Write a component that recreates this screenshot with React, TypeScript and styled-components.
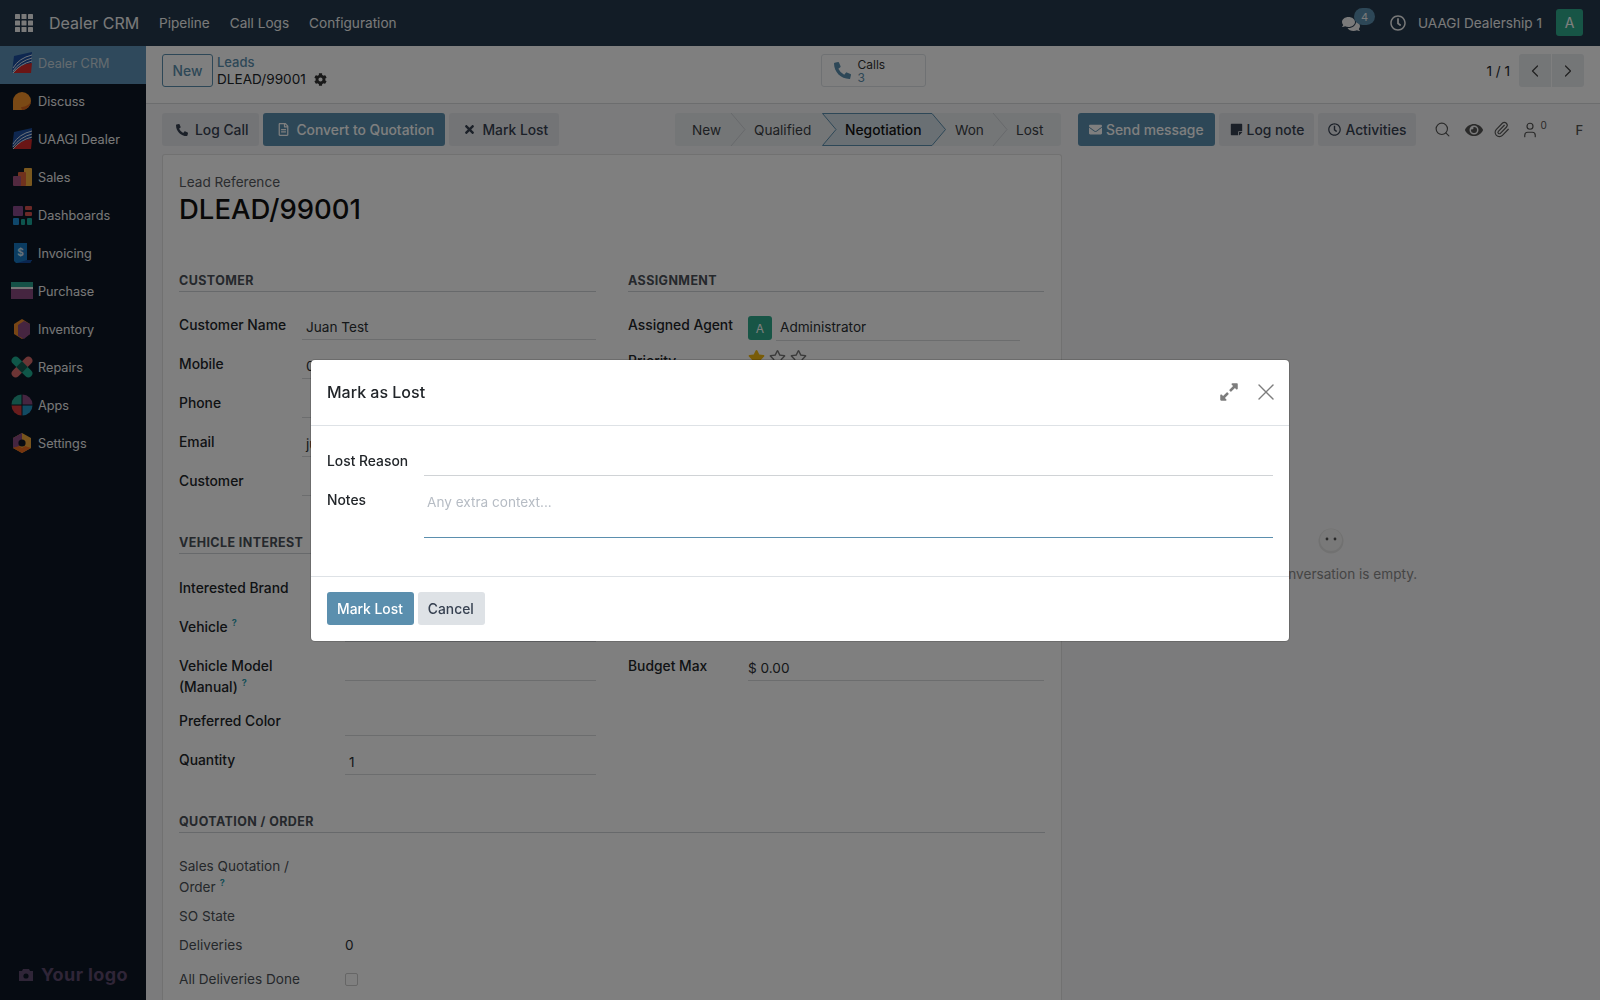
import React from "react";
import styled, { createGlobalStyle } from "styled-components";
import {
  FaPhoneAlt, FaRegFileAlt, FaTimes, FaEnvelope, FaStickyNote, FaRegClock, FaEye,
  FaCog, FaComments, FaStar, FaRegStar, FaExpandAlt,
} from "react-icons/fa";
import { ChevronLeft, ChevronRight, X, Search, Paperclip, User } from "lucide-react";

const Global = createGlobalStyle`
  html, body { margin: 0; padding: 0; height: 100%; background: #fff; }
  body { font-family: Inter, "Liberation Sans", sans-serif; font-size: 13.6px; color: #212529; overflow: hidden; }
  * { box-sizing: border-box; }
`;

const primary = "#5b8fae";
const medium = "13.85px";

const Page = styled.div`width: 1600px; height: 1000px; display: flex; flex-direction: column; overflow: hidden; position: relative;`;

const Navbar = styled.header`height: 46px; flex: none; background: #24394c; color: #f4f4f4; display: flex; align-items: center; padding-bottom: 1px;`;
const AppsIcon = styled.svg`width: 18px; height: 18px; margin: 0 16px 0 15px; flex: none;`;
const Brand = styled.span`font-size: 16px; width: 110px;`;
const NavMenu = styled.nav`display: flex; gap: 20px;`;
const NavRight = styled.div`margin-left: auto; display: flex; align-items: center; padding-right: 17px;`;
const ChatIcon = styled.span`position: relative; width: 48px; display: flex; font-size: 18px; margin-top: 3px;`;
const Badge = styled.span`position: absolute; left: 12px; top: -7px; width: 21px; height: 17px; border-radius: 9px; background: ${primary}; font-size: 11px; display: flex; align-items: center; justify-content: center;`;
const ClockIcon = styled.span`width: 28px; display: flex; font-size: 16px;`;
const Company = styled.span`margin-right: 14px;`;
const Avatar = styled.span`width: ${p => p.$size}px; height: ${p => p.$size}px; background: #2fab8c; border-radius: 3px; color: #fff; display: flex; align-items: center; justify-content: center; font-size: ${p => p.$font}px; flex: none;`;

const Body = styled.div`flex: 1; min-height: 0; display: flex;`;
const Sidebar = styled.aside`width: 146px; flex: none; background: #0c1724; display: flex; flex-direction: column; font-size: 12.7px; position: relative;`;
const SideItem = styled.div`height: 38px; display: flex; align-items: center; gap: 5px; padding: 0 0 4px 11px; background: ${p => p.$active ? "#5e93b8" : "transparent"}; color: ${p => p.$active ? "#c9d6de" : "#f0f0f0"};`;
const SideIcon = styled.svg`width: 22px; height: 22px; flex: none;`;
const YourLogo = styled.div`margin-top: auto; margin-bottom: 15px; display: flex; align-items: center; gap: 7px; padding-left: 18px; color: #5f4a6f; font-weight: 700; font-size: 18px; letter-spacing: .4px;`;

const Main = styled.main`flex: 1; min-width: 0; display: flex; flex-direction: column; background: #fff;`;
const ControlPanel = styled.div`height: 58px; flex: none; border-bottom: 1px solid #d8dadd; display: grid; grid-template-columns: 1fr auto 1fr; align-items: start; padding: 8px 16px 0;`;
const CpLeft = styled.div`display: flex; align-items: flex-start; gap: 4px;`;
const NewButton = styled.button`font: inherit; font-size: ${medium}; font-weight: 500; height: 33px; width: 51px; border: 1px solid ${primary}; border-radius: 3px; background: #fff; color: ${primary}; padding: 0;`;
const Breadcrumb = styled.div`display: flex; flex-direction: column; line-height: 16px;`;
const BreadLink = styled.span`color: ${primary}; font-weight: 500; font-size: 13px;`;
const BreadCurrent = styled.span`display: flex; align-items: center; gap: 8px; line-height: 18px; svg { font-size: 13px; color: #333; }`;
const CallsButton = styled.div`width: 105px; height: 33px; border: 1px solid #dee2e6; border-radius: 3px; display: flex; align-items: center; padding-left: 12px; gap: 7px; svg { font-size: 17px; color: ${primary}; }`;
const CallsText = styled.div`display: flex; flex-direction: column; font-size: 12px; line-height: 13px; color: #333; b { font-weight: 400; color: ${primary}; }`;
const Pager = styled.div`justify-self: end; display: flex; align-items: center; gap: 9px; height: 33px;`;
const PagerGroup = styled.div`display: flex; gap: 1px; border-radius: 3px; overflow: hidden;`;
const PagerBtn = styled.span`width: 32px; height: 33px; background: #e9ecef; display: flex; align-items: center; justify-content: center; color: #444;`;

const Workspace = styled.div`flex: 1; min-height: 0; display: flex; background: #f7f7f8;`;
const FormCol = styled.div`width: 916px; flex: none; padding: 9px 0 0 16px; display: flex; flex-direction: column;`;
const ActionBar = styled.div`height: 33px; flex: none; display: flex; align-items: stretch; justify-content: space-between;`;
const ActionGroup = styled.div`display: flex; gap: 4px;`;
const Btn = styled.button`font: inherit; font-size: ${medium}; font-weight: 500; border: 0; border-radius: 3px; height: 33px; padding: 0 ${p => p.$pr ?? 11}px 0 ${p => p.$pl ?? 11}px; display: flex; align-items: center; gap: ${p => p.$gap ?? 6}px; background: ${p => p.$primary ? primary : "#e7e9ed"}; color: ${p => p.$primary ? "#fff" : "#374151"}; svg { font-size: 13px; }`;
const CancelBtn = styled(Btn)`background: #dee2e6;`;
const StatusBar = styled.div`display: flex; background: #e9ecef; height: 33px; border-radius: 3px; margin-right: 1px;`;
const Stage = styled.div`position: relative; height: 33px; display: flex; align-items: center; padding-left: ${p => p.$first ? 17 : 23}px; width: ${p => p.$w}px; color: ${p => p.$active ? "#111" : "#3b3f44"}; font-size: ${p => p.$active ? medium : "inherit"}; font-weight: ${p => p.$active ? 500 : 400}; span { position: relative; }`;
const StageArrow = styled.svg`position: absolute; left: 100%; top: 0; width: 15px; height: 33px; overflow: visible;`;
const StageFill = styled.svg`position: absolute; left: 0; top: 0; width: calc(100% + 14px); height: 33px; overflow: visible;`;

const Sheet = styled.section`margin-top: 8px; flex: 1; background: #fff; border: 1px solid #e2e2e2; border-bottom: 0; border-radius: 3px 3px 0 0; padding: 17px 16px 0; overflow: hidden;`;
const RefLabel = styled.div`color: #55595e; line-height: 20px;`;
const RefValue = styled.h1`margin: 0; font-size: 27.5px; font-weight: 500; line-height: 34px; color: #111;`;
const Columns = styled.div`display: grid; grid-template-columns: 417px 416px; column-gap: 32px; margin-top: 47px;`;
const Group = styled.div`display: flex; flex-direction: column;`;
const SectionTitle = styled.div`height: 19px; border-bottom: 1px solid #cfd2d6; font-size: 12.5px; font-weight: 700; color: #4a5058; line-height: 16px; letter-spacing: .4px; margin-bottom: ${p => p.$mb ?? 16}px;`;
const Row = styled.div`display: grid; grid-template-columns: ${p => p.$label}px ${p => p.$valueW ? `${p.$valueW}px` : "1fr"}; height: ${p => p.$h ?? 39}px; align-items: start;`;
const Label = styled.div`font-size: ${p => p.$light ? "inherit" : medium}; font-weight: ${p => p.$light ? 400 : 500}; color: ${p => p.$light ? "#4b5056" : "#212529"}; line-height: 21px; padding-top: 7px; white-space: nowrap;`;
const LabelLine = styled.div`display: block;`;
const Value = styled.div`height: ${p => p.$plain ? "auto" : "32px"}; line-height: 20px; padding: ${p => p.$plain ? "7px 0 0 0" : `9px 0 0 ${p.$flush ? 0 : 4}px`}; border-bottom: ${p => p.$plain ? "0" : "1px solid #d8dadd"}; color: #2b2f33; white-space: nowrap; overflow: hidden;`;
const Help = styled.sup`color: #2f9db0; font-size: 9px; font-weight: 700; margin-left: 4px; line-height: 0;`;
const AgentValue = styled.div`display: flex; gap: 4px; align-items: flex-start; padding-top: 8px;`;
const AgentName = styled.div`flex: 1; height: 25px; border-bottom: 1px solid #d8dadd; line-height: 20px; padding: 1px 0 0 4px; color: #2b2f33;`;
const Stars = styled.div`display: flex; gap: 4px; padding-top: 5px; svg { font-size: 17px; }`;
const Checkbox = styled.span`display: block; width: 13px; height: 13px; border: 1px solid #ccc; border-radius: 2px; margin-top: 11px;`;
const SectionSpacer = styled.div`height: ${p => p.$h}px;`;

const Chatter = styled.aside`flex: 1; min-width: 0; padding: 9px 0 0 16px; display: flex; flex-direction: column;`;
const ChatterBar = styled.div`display: flex; gap: 4px; align-items: center; position: relative;`;
const ChatterTools = styled.div`display: flex; align-items: center; margin-left: 14px;`;
const Tool = styled.span`display: flex; align-items: center; width: ${p => p.$w}px; color: #555; sup { font-size: 10px; margin-left: 2px; align-self: flex-start; line-height: 8px; }`;
const FollowLetter = styled.span`font-weight: 500; color: #555; font-size: 13px;`;
const EmptyChat = styled.div`flex: 1; display: flex; flex-direction: column; align-items: center; padding: 382px 17px 0 0; color: #8a8a8a;`;
const Face = styled.svg`width: 26px; height: 26px; margin-bottom: 12px;`;

const Backdrop = styled.div`position: fixed; inset: 0; background: rgba(0,0,0,.5); display: flex; align-items: center; justify-content: center;`;
const Modal = styled.div`width: 978px; height: 281px; background: #fff; border-radius: 4px; box-shadow: 0 0 0 1px rgba(0,0,0,.15); display: flex; flex-direction: column;`;
const ModalHeader = styled.div`height: 66px; flex: none; border-bottom: 1px solid #dee2e6; display: flex; align-items: center; padding: 0 9px 1px 16px;`;
const ModalTitle = styled.div`font-size: 16px; font-weight: 500; color: #212529; flex: 1; line-height: 1;`;
const ModalTools = styled.div`display: flex; align-items: center; gap: 13px; color: #7d7d7d; svg:first-child { font-size: 20px; }`;
const ModalBody = styled.div`flex: 1; padding: 20px 16px 0; display: flex; flex-direction: column;`;
const ModalRow = styled.div`display: grid; grid-template-columns: 97px 1fr; height: ${p => p.$h}px; margin-bottom: ${p => p.$mb ?? 0}px;`;
const ModalLabel = styled.div`font-size: ${medium}; font-weight: 500; line-height: 20px; padding-top: ${p => p.$pt ?? 5}px;`;
const ModalInput = styled.div`border-bottom: 1px solid ${p => p.$focus ? primary : "#d0d3d6"}; color: #b6bcc4; padding: 12px 0 0 3px; line-height: 20px; height: 100%;`;
const ModalFooter = styled.div`height: 65px; flex: none; border-top: 1px solid #dee2e6; display: flex; gap: 4px; align-items: center; padding: 0 16px;`;

const Logo = () => (
  <SideIcon viewBox="0 0 22 22">
    <path d="M1 20 L3 4 Q12 2 21 0 L20 12 Q10 12 1 20Z" fill="#1c4fa0" />
    <path d="M2 21 Q8 12 21 11 L20 21Z" fill="#d42b2b" />
    <path d="M2 16 Q8 6 21 3 M2 19 Q9 9 21 6 M2 21 Q9 12 21 9" stroke="#dfe8f4" strokeWidth="1" fill="none" />
  </SideIcon>
);
const AppIcon: React.FC<{ k: string }> = ({ k }) => {
  if (k === "logo") return <Logo />;
  if (k === "discuss") return <SideIcon viewBox="0 0 22 22"><path d="M2 20V11a9 9 0 1 1 9 9Z" fill="#f4922a" /><path d="M11 20c5 0 8-4 9-8-3 4-7 5-10 5Z" fill="#d9651d" /></SideIcon>;
  if (k === "sales") return <SideIcon viewBox="0 0 22 22"><rect x="13" y="2" width="8" height="18" rx="1" fill="#f5b13d" /><rect x="7" y="6" width="8" height="14" rx="1" fill="#e0653a" /><rect x="2" y="10" width="8" height="10" rx="1" fill="#a5527f" /></SideIcon>;
  if (k === "dash") return <SideIcon viewBox="0 0 22 22"><rect x="2" y="2" width="10" height="10" rx="1" fill="#8a4b8c" /><rect x="14" y="2" width="7" height="4" rx="1" fill="#d9534f" /><rect x="14" y="8" width="7" height="4" rx="1" fill="#d9534f" /><rect x="2" y="14" width="6" height="7" rx="1" fill="#1f8fd6" /><rect x="10" y="15" width="4" height="6" rx="1" fill="#1aa89a" /><rect x="16" y="14" width="5" height="7" rx="1" fill="#1aa89a" /></SideIcon>;
  if (k === "invoice") return <SideIcon viewBox="0 0 22 22"><path d="M3 1h13v17h5l-2 3H5l-2-2Z" fill="#1778c2" /><path d="M16 18h5l-2 3H6Z" fill="#144a9e" /><text x="9.5" y="14" fontSize="10" fontWeight="700" fill="#cfe7f7" textAnchor="middle" fontFamily="Inter">$</text></SideIcon>;
  if (k === "purchase") return <SideIcon viewBox="0 0 22 22"><rect x="0" y="2" width="22" height="5" fill="#2aa38f" /><rect x="0" y="7" width="22" height="2" fill="#eee" /><rect x="0" y="9" width="22" height="10" fill="#8a4a80" /></SideIcon>;
  if (k === "inventory") return <SideIcon viewBox="0 0 22 22"><path d="M11 1 3 6v10l8 5 8-5V6Z" fill="#f08c2a" /><path d="M13 3l6 3v10l-6 5-6-3V7Z" fill="#8a4a80" /></SideIcon>;
  if (k === "repairs") return <SideIcon viewBox="0 0 22 22"><g transform="rotate(45 11 11)"><rect x="7" y="-2" width="8" height="26" rx="4" fill="#d96a6a" /><rect x="-2" y="7" width="26" height="8" rx="4" fill="#1fae92" /><rect x="7" y="7" width="8" height="8" fill="#15594f" /></g></SideIcon>;
  if (k === "apps") return <SideIcon viewBox="0 0 22 22"><path d="M10.5 0.5v10H0.5A10 10 0 0 1 10.5 .5Z" fill="#26a08c" /><path d="M11.5 .5a10 10 0 0 1 10 10h-10Z" fill="#8a4a80" /><path d="M.5 11.5h10v10a10 10 0 0 1-10-10Z" fill="#d23a3a" /><path d="M11.5 11.5h10a10 10 0 0 1-10 10Z" fill="#2394c4" /></SideIcon>;
  return <SideIcon viewBox="0 0 22 22"><path d="M11 1l9 5v10l-9 5-9-5V6Z" fill="#f0a83a" /><path d="M2 6l9-5v7l-3 2v5l-6 1Z" fill="#8a4a80" /><path d="M2 16l6-2 3 2 3-2 6 2-9 5Z" fill="#ea6a1e" /><circle cx="11" cy="11" r="3.6" fill="#0c1724" /></SideIcon>;
};

const Chevron = () => <StageArrow viewBox="0 0 15 33"><path d="M0 0 L14 16.5 L0 33" fill="none" stroke="#cfd3d7" /></StageArrow>;
const StageActive = () => <StageFill viewBox="0 0 124 33" preserveAspectRatio="none"><path d="M0.5 .5H110L123.5 16.5 110 32.5H.5L14 16.5Z" fill="#d5e0e8" stroke={primary} /></StageFill>;

const sideItems: [string, string][] = [["Dealer CRM", "logo"], ["Discuss", "discuss"], ["UAAGI Dealer", "logo"], ["Sales", "sales"], ["Dashboards", "dash"], ["Invoicing", "invoice"], ["Purchase", "purchase"], ["Inventory", "inventory"], ["Repairs", "repairs"], ["Apps", "apps"], ["Settings", "settings"]];
const gridCells = [0, 6.5, 13];

export default function App() {
  return (
    <Page>
      <Global />
      <Navbar>
        <AppsIcon viewBox="0 0 18 18">
          {gridCells.flatMap(y => gridCells.map(x => <rect key={`${x}-${y}`} x={x} y={y} width="5" height="5" rx=".6" fill="#f4f4f4" />))}
        </AppsIcon>
        <Brand>Dealer CRM</Brand>
        <NavMenu><span>Pipeline</span><span>Call Logs</span><span>Configuration</span></NavMenu>
        <NavRight>
          <ChatIcon><FaComments /><Badge>4</Badge></ChatIcon>
          <ClockIcon><FaRegClock /></ClockIcon>
          <Company>UAAGI Dealership 1</Company>
          <Avatar $size={27} $font={14}>A</Avatar>
        </NavRight>
      </Navbar>
      <Body>
        <Sidebar>
          {sideItems.map(([name, k], i) => (
            <SideItem key={name} $active={i === 0}><AppIcon k={k} />{name}</SideItem>
          ))}
          <YourLogo>
            <svg width="16" height="14" viewBox="0 0 16 14"><path d="M1 3h3l1-2h6l1 2h3v10H1Z" fill="currentColor" /><circle cx="8" cy="8" r="2.6" fill="#0c1724" /></svg>
            Your logo
          </YourLogo>
        </Sidebar>
        <Main>
          <ControlPanel>
            <CpLeft>
              <NewButton>New</NewButton>
              <Breadcrumb>
                <BreadLink>Leads</BreadLink>
                <BreadCurrent>DLEAD/99001 <FaCog /></BreadCurrent>
              </Breadcrumb>
            </CpLeft>
            <CallsButton>
              <FaPhoneAlt />
              <CallsText>Calls<b>3</b></CallsText>
            </CallsButton>
            <Pager>
              1 / 1
              <PagerGroup>
                <PagerBtn><ChevronLeft size={20} strokeWidth={1.5} /></PagerBtn>
                <PagerBtn><ChevronRight size={20} strokeWidth={1.5} /></PagerBtn>
              </PagerGroup>
            </Pager>
          </ControlPanel>
          <Workspace>
            <FormCol>
              <ActionBar>
                <ActionGroup>
                  <Btn $pl={14} $pr={11} $gap={7}><FaPhoneAlt size={12} />Log Call</Btn>
                  <Btn $primary $pl={14} $pr={11}><FaRegFileAlt />Convert to Quotation</Btn>
                  <Btn $pl={14} $pr={11} $gap={6}><FaTimes />Mark Lost</Btn>
                </ActionGroup>
                <StatusBar>
                  <Stage $first $w={56}><span>New</span><Chevron /></Stage>
                  <Stage $w={91}><span>Qualified</span></Stage>
                  <Stage $w={110} $active><StageActive /><span>Negotiation</span></Stage>
                  <Stage $w={61}><span>Won</span><Chevron /></Stage>
                  <Stage $w={68}><span>Lost</span></Stage>
                </StatusBar>
              </ActionBar>
              <Sheet>
                <RefLabel>Lead Reference</RefLabel>
                <RefValue>DLEAD/99001</RefValue>
                <Columns>
                  <Group>
                    <SectionTitle>CUSTOMER</SectionTitle>
                    <Row $label={123}><Label>Customer Name</Label><Value>Juan Test</Value></Row>
                    <Row $label={123}><Label>Mobile</Label><Value>09171234567</Value></Row>
                    <Row $label={123}><Label>Phone</Label><Value /></Row>
                    <Row $label={123}><Label>Email</Label><Value>juan@test.com</Value></Row>
                    <Row $label={123}><Label>Customer</Label><Value /></Row>
                    <SectionSpacer $h={32} />
                    <SectionTitle $mb={17}>VEHICLE INTEREST</SectionTitle>
                    <Row $label={166}><Label>Interested Brand</Label><Value /></Row>
                    <Row $label={166}><Label>Vehicle<Help>?</Help></Label><Value /></Row>
                    <Row $label={166} $h={55}><Label><LabelLine>Vehicle Model</LabelLine><LabelLine>(Manual)<Help>?</Help></LabelLine></Label><Value /></Row>
                    <Row $label={166}><Label>Preferred Color</Label><Value /></Row>
                    <Row $label={166}><Label>Quantity</Label><Value>1</Value></Row>
                  </Group>
                  <Group>
                    <SectionTitle>ASSIGNMENT</SectionTitle>
                    <Row $label={120} $valueW={272} $h={36}>
                      <Label>Assigned Agent</Label>
                      <AgentValue><Avatar $size={24} $font={12}>A</Avatar><AgentName>Administrator</AgentName></AgentValue>
                    </Row>
                    <Row $label={120}>
                      <Label>Priority</Label>
                      <Stars><FaStar color="#f3b80e" /><FaRegStar color="#777" /><FaRegStar color="#777" /></Stars>
                    </Row>
                    <SectionSpacer $h={266} />
                    <Row $label={120}><Label>Budget Max</Label><Value $flush>$ 0.00</Value></Row>
                  </Group>
                </Columns>
                <SectionSpacer $h={32} />
                <SectionTitle>QUOTATION / ORDER</SectionTitle>
                <Group>
                  <Row $label={166} $valueW={250} $h={50}><Label $light><LabelLine>Sales Quotation /</LabelLine><LabelLine>Order<Help>?</Help></LabelLine></Label></Row>
                  <Row $label={166} $h={29}><Label $light>SO State</Label></Row>
                  <Row $label={166} $h={34}><Label $light>Deliveries</Label><Value $plain>0</Value></Row>
                  <Row $label={166}><Label $light>All Deliveries Done</Label><Checkbox /></Row>
                </Group>
              </Sheet>
            </FormCol>
            <Chatter>
              <ChatterBar>
                <Btn $primary $gap={4}><FaEnvelope />Send message</Btn>
                <Btn $gap={4} $pr={10}><FaStickyNote />Log note</Btn>
                <Btn $gap={4} $pl={10} $pr={9}><FaRegClock />Activities</Btn>
                <ChatterTools>
                  <Tool $w={31}><Search size={17} strokeWidth={1.6} /></Tool>
                  <Tool $w={28}><FaEye size={18} /></Tool>
                  <Tool $w={28}><Paperclip size={17} strokeWidth={1.6} /></Tool>
                  <Tool $w={55}><User size={18} strokeWidth={1.6} /><sup>0</sup></Tool>
                  <FollowLetter>F</FollowLetter>
                </ChatterTools>
              </ChatterBar>
              <EmptyChat>
                <Face viewBox="0 0 26 26"><circle cx="13" cy="13" r="12.5" fill="#e2e2e2" /><circle cx="13" cy="12" r="11" fill="#f2f2f2" /><circle cx="9" cy="11" r="1.4" fill="#555" /><circle cx="17" cy="11" r="1.4" fill="#555" /></Face>
                The conversation is empty.
              </EmptyChat>
            </Chatter>
          </Workspace>
        </Main>
      </Body>
      <Backdrop>
        <Modal>
          <ModalHeader>
            <ModalTitle>Mark as Lost</ModalTitle>
            <ModalTools><FaExpandAlt /><X size={28} strokeWidth={1.2} /></ModalTools>
          </ModalHeader>
          <ModalBody>
            <ModalRow $h={30} $mb={4}><ModalLabel>Lost Reason</ModalLabel><ModalInput /></ModalRow>
            <ModalRow $h={58}><ModalLabel $pt={10}>Notes</ModalLabel><ModalInput $focus>Any extra context...</ModalInput></ModalRow>
          </ModalBody>
          <ModalFooter>
            <Btn $primary $pl={10} $pr={11}>Mark Lost</Btn>
            <CancelBtn $pl={10} $pr={11}>Cancel</CancelBtn>
          </ModalFooter>
        </Modal>
      </Backdrop>
    </Page>
  );
}
